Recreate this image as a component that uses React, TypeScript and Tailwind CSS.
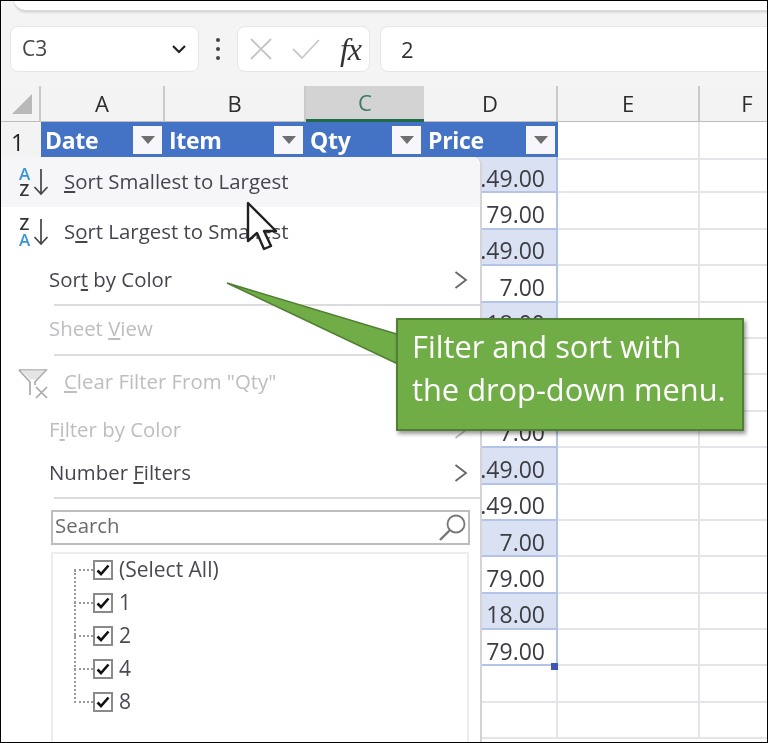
import React from "react";

const rows: [string, boolean][] = [
  [".49.00", true], ["79.00", false], [".49.00", true], ["7.00", false], ["18.00", true],
  ["79.00", false], [".49.00", true], ["7.00", false], [".49.00", true], [".49.00", false],
  ["7.00", true], ["79.00", false], ["18.00", true], ["79.00", false], ["", false], ["", false],
];

const grid = "grid grid-cols-[41px_124px_141px_118px_134px_142px_68px]";

function FilterBtn() {
  return (
    <div className="w-[29px] h-[28px] bg-[#f7f7fb] flex items-center justify-center shrink-0">
      <svg width="14" height="8" viewBox="0 0 14 8"><path d="M0 0h14L7 8z" fill="#6f6f6f" /></svg>
    </div>
  );
}

function HeadCell({ label }: { label: string }) {
  return (
    <div className="bg-[#4472c4] flex items-center justify-between pl-[4px] pr-[3px] h-full border-b-2 border-[#3f68b5]">
      <span className="pt-[1px] text-white font-bold text-[23px] leading-none font-['Open_Sans',sans-serif] tracking-[-0.3px]">{label}</span>
      <FilterBtn />
    </div>
  );
}

function ColHead({ label, active }: { label: string; active?: boolean }) {
  return (
    <div className={`flex items-center justify-center h-full text-[22px] ${active ? "bg-[#d3d3d3] text-[#3f7a63] border-b-[3px] border-[#1f6b4a]" : "border-r-2 border-[#c9c9c9] border-b border-b-[#bdbdbd] text-[#2c2c2c]"}`}>
      {label}
    </div>
  );
}

function Check({ label }: { label: string }) {
  return (
    <div className="flex items-center h-[33px] relative">
      <span className="w-[19px] border-t-2 border-dotted border-[#9a9a9a]" />
      <span className="w-5 h-5 border-2 border-[#8a8a8a] flex items-center justify-center bg-white">
        <svg width="14" height="12" viewBox="0 0 14 12"><path d="M1.5 6.5 5 10l7.5-8.5" fill="none" stroke="#111" strokeWidth="2.6" /></svg>
      </span>
      <span className="ml-[6px] text-[21px] leading-none text-[#4a4a55]">{label}</span>
    </div>
  );
}

function Chevron({ light }: { light?: boolean }) {
  return (
    <svg width="14" height="20" viewBox="0 0 14 20" className="shrink-0">
      <path d="M1.5 2 12 10 1.5 18" fill="none" stroke={light ? "#bdbdbd" : "#666"} strokeWidth="1.8" />
    </svg>
  );
}

function Sep() {
  return <div className="ml-[54px] h-0.5 bg-[#dcdcdf]" />;
}

function SortIcon({ top, bottom, topBlue }: { top: string; bottom: string; topBlue: boolean }) {
  return (
    <div className="w-[36px] flex items-center ml-[17px] mr-[11px] shrink-0">
      <div className="flex flex-col items-center w-[15px] text-[17px] leading-[16px] font-semibold font-['Open_Sans',sans-serif]">
        <span className={topBlue ? "text-[#3a96d8]" : "text-[#333]"}>{top}</span>
        <span className={topBlue ? "text-[#333]" : "text-[#3a96d8]"}>{bottom}</span>
      </div>
      <svg width="16" height="28" viewBox="0 0 16 28" className="ml-[1px]">
        <path d="M8 1v25M1.5 19 8 26l6.5-7" fill="none" stroke="#444" strokeWidth="1.7" />
      </svg>
    </div>
  );
}

export default function App() {
  return (
    <div className="relative w-[768px] h-[743px] overflow-hidden bg-white">
      <div className="relative w-[768px] h-[743px] overflow-hidden bg-white font-['Open_Sans',sans-serif] text-[#333] blur-[0.5px]">
        {/* Ribbon remnant */}
        <div className="h-[86px] bg-[#f4f4f4] flex flex-col">
          <div className="h-[12px] ml-[14px] bg-white rounded-bl-xl border-b-2 border-[#dadada] shadow-[0_1px_2px_#ddd]" />
          <div className="mt-[14px] h-[46px] flex items-stretch pl-[10px]">
            <div className="w-[189px] bg-white rounded-lg border border-[#e6e6e6] flex items-center justify-between pl-[11px] pr-[11px]">
              <span className="text-[21px] text-[#444]">C3</span>
              <svg width="16" height="10" viewBox="0 0 16 10"><path d="M2 2l6 6 6-6" fill="none" stroke="#222" strokeWidth="2.2" /></svg>
            </div>
            <div className="w-[38px] flex flex-col items-center justify-center gap-[5px]">
              <span className="w-1 h-1 rounded-full bg-[#444]" />
              <span className="w-1 h-1 rounded-full bg-[#444]" />
              <span className="w-1 h-1 rounded-full bg-[#444]" />
            </div>
            <div className="w-[133px] bg-white rounded-lg border border-[#e6e6e6] flex items-center pl-[11px] pr-[8px] justify-between">
              <svg width="24" height="24" viewBox="0 0 24 24"><path d="M2 2l20 20M22 2 2 22" stroke="#c4c4c4" strokeWidth="1.8" /></svg>
              <svg width="30" height="24" viewBox="0 0 30 24"><path d="M2 12l9 9L28 3" fill="none" stroke="#c9c9c9" strokeWidth="1.8" /></svg>
              <span className="text-[32px] italic font-['Liberation_Serif',serif] text-[#333] leading-none tracking-[-1px]">fx</span>
            </div>
            <div className="ml-[10px] flex-1 bg-white rounded-l-lg border border-[#e6e6e6] border-r-0 flex items-center pl-[20px] text-[22px] text-[#333]">2</div>
          </div>
        </div>

        {/* Column headers */}
        <div className={`${grid} h-[35px] bg-[#f3f3f4]`}>
          <div className="flex items-end justify-end pr-[7px] pb-[7px] border-r-2 border-[#c9c9c9] border-b border-b-[#bdbdbd]">
            <svg width="20" height="20" viewBox="0 0 20 20"><path d="M20 0v20H0z" fill="#b9b9b9" /></svg>
          </div>
          <ColHead label="A" />
          <ColHead label="B" />
          <ColHead label="C" active />
          <ColHead label="D" />
          <ColHead label="E" />
          <div className="flex items-center justify-center h-full text-[22px] border-b border-[#bdbdbd] text-[#2c2c2c] pl-[26px]">F</div>
        </div>

        {/* Table header row */}
        <div className={`${grid} h-[36px] pt-[1px]`}>
          <div className="flex items-center pl-[11px] pt-[3px] text-[23px] bg-[#f3f3f4] text-[#222]">1</div>
          <HeadCell label="Date" />
          <HeadCell label="Item" />
          <HeadCell label="Qty" />
          <HeadCell label="Price" />
          <div className="border-r-2 border-b-2 border-[#e4e4ea]" />
          <div className="border-b-2 border-[#e4e4ea]" />
        </div>

        {/* Data rows */}
        {rows.map(([price, band], i) => (
          <div key={i} className={`${grid} h-[36.4px]`}>
            <div className="col-span-4" />
            <div className={`flex items-center justify-end pr-[11px] pt-[8px] text-[23px] leading-none text-[#3c3c44] border-r-2 border-b-2 ${price ? "border-[#b4c4e6]" : "border-[#e4e4ea]"} ${band ? "bg-[#d9e1f2]" : "bg-white"}`}>
              {price}
            </div>
            <div className="border-r-2 border-b-2 border-[#e4e4ea]" />
            <div className="border-b-2 border-[#e4e4ea]" />
          </div>
        ))}

        {/* Fill handle */}
        <div className="absolute left-[551px] top-[663px] w-[7px] h-[7px] bg-[#3f56b5]" />

        {/* Dropdown menu */}
        <div className="absolute left-0 top-[157px] bottom-0 w-[482px] bg-white border-r-2 border-[#d4d4d8] rounded-tr-lg text-[20.4px] leading-none text-[#454550]">
          <div className="h-[50px] flex items-center bg-[#f6f5f7] rounded-tr-lg">
            <SortIcon top="A" bottom="Z" topBlue />
            <span className="pb-[2px]"><u className="underline underline-offset-2">S</u>ort Smallest to Largest</span>
          </div>
          <div className="h-[49px] flex items-center">
            <SortIcon top="Z" bottom="A" topBlue={false} />
            <span>S<u className="underline underline-offset-2">o</u>rt Largest to Smallest</span>
          </div>
          <div className="h-[48px] flex items-center pl-[49px] pr-[12px] justify-between">
            <span className="pb-[2px]">Sor<u className="underline underline-offset-2">t</u> by Color</span>
            <Chevron />
          </div>
          <Sep />
          <div className="h-[48px] flex items-center pl-[49px] text-[#bdbdc2]">
            <span className="pb-[4px]">Sheet <u className="underline underline-offset-2">V</u>iew</span>
          </div>
          <Sep />
          <div className="h-[53px] flex items-center text-[#bdbdc2]">
            <svg width="32" height="32" viewBox="0 0 32 32" className="ml-[17px] mr-[15px] shrink-0">
              <path d="M2 3h27L18 15v3M2 3l11 12v13" fill="none" stroke="#a9a9ad" strokeWidth="1.7" />
              <path d="M4 3.5h24l-9 9h-6z" fill="#e4e4e6" />
              <path d="M19 20l11 11M30 20 19 31" stroke="#a9a9ad" strokeWidth="1.7" />
            </svg>
            <span className="pb-[2px]"><u className="underline underline-offset-2">C</u>lear Filter From "Qty"</span>
          </div>
          <div className="h-[42px] flex items-center pl-[49px] pr-[12px] justify-between text-[#bdbdc2]">
            <span className="pb-[2px]">F<u className="underline underline-offset-2">i</u>lter by Color</span>
            <Chevron light />
          </div>
          <div className="h-[43px] flex items-center pl-[49px] pr-[12px] justify-between">
            <span>Number <u className="underline underline-offset-2">F</u>ilters</span>
            <Chevron />
          </div>
          <div className="mt-[3px]"><Sep /></div>
          <div className="mt-[11px] ml-[51px] w-[419px] h-[35px] border-2 border-[#bdbdbd] flex items-center justify-between pl-[2px] text-[#6a6a70]">
            <span className="pb-[4px]">Search</span>
            <svg width="30" height="30" viewBox="0 0 30 30">
              <circle cx="18" cy="11" r="8.5" fill="none" stroke="#777" strokeWidth="1.8" />
              <path d="M12 17 2 27" stroke="#777" strokeWidth="2.4" />
            </svg>
          </div>
          <div className="mt-[7px] ml-[51px] w-[418px] h-[200px] border-2 border-[#ededf0] pl-[21px] relative">
            <div className="absolute left-[21px] top-[16px] h-[133px] border-l-2 border-dotted border-[#9a9a9a]" />
            <div className="-mt-px">
              <Check label="(Select All)" />
              <Check label="1" />
              <Check label="2" />
              <Check label="4" />
              <Check label="8" />
            </div>
          </div>
        </div>

        {/* Mouse cursor */}
        <svg width="36" height="52" viewBox="0 0 36 52" className="absolute left-[245px] top-[201px]">
          <path d="M3 2v38l9-8 7 16 7-3-7-15h12z" fill="#fff" stroke="#222" strokeWidth="2.4" strokeLinejoin="round" />
        </svg>

        {/* Callout */}
        <svg width="180" height="90" viewBox="0 0 180 90" className="absolute left-[225px] top-[281px]">
          <path d="M2 2 175 54V84z" fill="#70ad47" stroke="#507e32" strokeWidth="1.6" />
        </svg>
        <div className="absolute left-[396px] top-[318px] w-[348px] h-[113px] bg-[#70ad47] border-2 border-[#507e32] shadow-[2px_3px_4px_rgba(0,0,0,0.4)] pl-[14px] pt-[5px] text-white text-[30.8px] leading-[43px] whitespace-nowrap">
          <div>Filter and sort with</div>
          <div>the drop-down menu.</div>
        </div>
      </div>

      {/* Frame */}
      <div className="absolute inset-0 border border-black pointer-events-none" />
    </div>
  );
}
